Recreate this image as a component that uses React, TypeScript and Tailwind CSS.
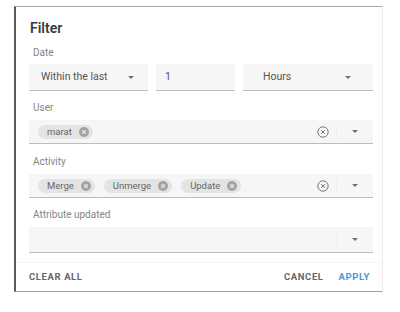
import React from "react";

const Caret = () => (
  <svg width="6" height="3" viewBox="0 0 6 3" className="shrink-0">
    <path d="M0 0 L6 0 L3 3 Z" fill="#707070" />
  </svg>
);

const ChipX = () => (
  <svg width="10" height="10" viewBox="0 0 10 10" className="shrink-0">
    <circle cx="5" cy="5" r="5" fill="#a3a3a3" />
    <path d="M3.2 3.2 L6.8 6.8 M6.8 3.2 L3.2 6.8" stroke="#e4e4e4" strokeWidth="1.3" />
  </svg>
);

const ClearCircle = () => (
  <svg width="12" height="12" viewBox="0 0 12 12" className="shrink-0">
    <circle cx="6" cy="6" r="5.2" fill="none" stroke="#777" strokeWidth="1" />
    <path d="M4.1 4.1 L7.9 7.9 M7.9 4.1 L4.1 7.9" stroke="#777" strokeWidth="1" />
  </svg>
);

const Chip = ({ label }: { label: string }) => (
  <div className="flex items-center gap-[7px] h-[14px] rounded-full bg-[#e4e4e4] pl-[9px] pr-[4px]">
    <span className="text-[9.5px] leading-none text-[#666]">{label}</span>
    <ChipX />
  </div>
);

const Label = ({ children }: { children: React.ReactNode }) => (
  <div className="pl-[4px] text-[10px] leading-[13px] text-[#858585]">{children}</div>
);

const ChipField = ({ chips }: { chips: string[] }) => (
  <div className="flex items-center bg-[#f6f6f6] border-b border-[#bdbdbd] pl-[9px] h-[24px]">
    <div className="flex items-center gap-[9px] flex-1">
      {chips.map((c) => (
        <Chip key={c} label={c} />
      ))}
    </div>
    <div className="w-[26px] flex justify-center">
      <ClearCircle />
    </div>
    <div className="w-[1px] h-[14px] bg-[#efefef]" />
    <div className="w-[36px] flex justify-center">
      <Caret />
    </div>
  </div>
);

export default function App() {
  return (
    <div className="w-[400px] h-[312px] bg-white pt-[6px] pl-[14px]" style={{ fontFamily: "Roboto, 'Liberation Sans', sans-serif" }}>
      <div className="w-[369px] h-[286px] bg-white border-l-2 border-l-[#5a5a5a] border-t border-t-[#a8a8a8] border-r border-r-[#ececec] border-b border-b-[#a0a0a0] flex flex-col">
        <div className="pl-[13px] pr-[9px] pt-[12px] flex-1">
          <div className="pl-[1px] text-[14px] leading-[18px] font-semibold text-[#3a3a3a]">Filter</div>

          <div className="mt-[9px]">
            <Label>Date</Label>
          </div>
          <div className="mt-[5px] flex gap-[8px] h-[27px]">
            <div className="w-[119px] flex items-center justify-between bg-[#f6f6f6] border-b border-[#bdbdbd] pl-[12px] pr-[14px]">
              <span className="text-[10.5px] text-[#555]">Within the last</span>
              <Caret />
            </div>
            <div className="w-[79px] flex items-center bg-[#f6f6f6] border-b border-[#bdbdbd] pl-[9px]">
              <span className="text-[10.5px] text-[#555]">1</span>
            </div>
            <div className="w-[130px] flex items-center justify-between bg-[#f6f6f6] border-b border-[#bdbdbd] pl-[20px] pr-[22px]">
              <span className="text-[10.5px] text-[#555]">Hours</span>
              <Caret />
            </div>
          </div>

          <div className="mt-[10px]">
            <Label>User</Label>
          </div>
          <div className="mt-[6px]">
            <ChipField chips={["marat"]} />
          </div>

          <div className="mt-[11px]">
            <Label>Activity</Label>
          </div>
          <div className="mt-[6px]">
            <ChipField chips={["Merge", "Unmerge", "Update"]} />
          </div>

          <div className="mt-[10px]">
            <Label>Attribute updated</Label>
          </div>
          <div className="mt-[6px] flex items-center justify-end bg-[#f6f6f6] border-b border-[#bdbdbd] h-[26px]">
            <div className="w-[1px] h-[14px] bg-[#efefef]" />
            <div className="w-[36px] flex justify-center">
              <Caret />
            </div>
          </div>
        </div>

        <div className="border-t border-[#f4f4f4] h-[29px] flex items-center justify-between pl-[13px] pr-[12px]">
          <span className="text-[9.5px] font-bold tracking-[0.6px] text-[#666]">CLEAR ALL</span>
          <div className="flex items-center gap-[15px]">
            <span className="text-[9.5px] font-bold tracking-[0.6px] text-[#666]">CANCEL</span>
            <span className="text-[9.5px] font-bold tracking-[0.6px] text-[#4a94e0]">APPLY</span>
          </div>
        </div>
      </div>
    </div>
  );
}
